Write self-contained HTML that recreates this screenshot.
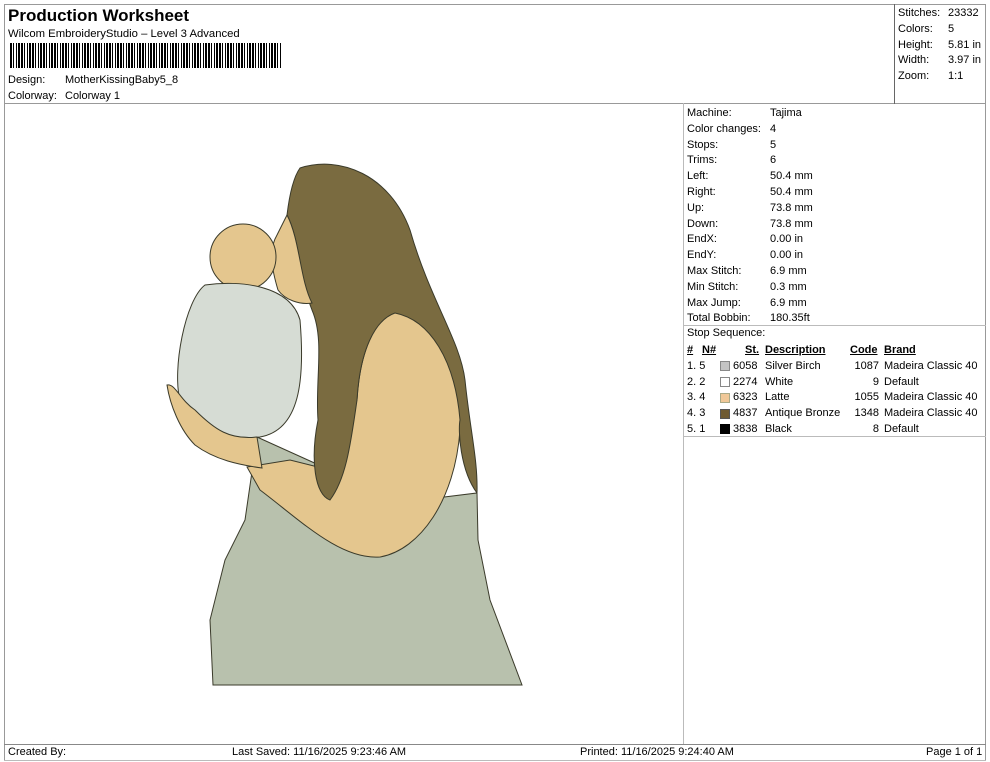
<!DOCTYPE html>
<html><head><meta charset="utf-8"><style>
*{margin:0;padding:0;box-sizing:border-box}
body{width:990px;height:762px;background:#fff;font-family:"Liberation Sans",Arial,sans-serif;font-size:11px;color:#000;position:relative;overflow:hidden}
.a{position:absolute;white-space:nowrap}
.ln{position:absolute;background:#999}
</style></head><body>
<div class="ln" style="left:4px;top:4px;width:982px;height:1px"></div>
<div class="ln" style="left:4px;top:4px;width:1px;height:756px"></div>
<div class="ln" style="left:985px;top:4px;width:1px;height:756px"></div>
<div class="ln" style="left:4px;top:103px;width:982px;height:1px"></div>
<div class="ln" style="left:894px;top:4px;width:1px;height:100px;background:#666"></div>
<div class="ln" style="left:683px;top:103px;width:1px;height:641px;background:#bbb"></div>
<div class="ln" style="left:4px;top:744px;width:982px;height:1px;background:#888"></div>
<div class="ln" style="left:4px;top:760px;width:982px;height:1px;background:#bbb"></div>
<div class="ln" style="left:683px;top:325px;width:303px;height:1px;background:#bbb"></div>
<div class="ln" style="left:683px;top:436px;width:303px;height:1px;background:#bbb"></div>

<div class="a" style="left:8px;top:6px;font-size:17px;font-weight:bold">Production Worksheet</div>
<div class="a" style="left:8px;top:28px;font-size:11.3px">Wilcom EmbroideryStudio – Level 3 Advanced</div>
<div class="a" style="left:10px;top:43px;width:272px;height:25px;background:repeating-linear-gradient(90deg,#000 0 2px,#fff 2px 3px,#000 3px 4px,#fff 4px 6px,#000 6px 7px,#fff 7px 8px,#000 8px 10px,#fff 10px 11px)"></div>
<div class="a" style="left:8px;top:74px">Design:</div><div class="a" style="left:65px;top:74px">MotherKissingBaby5_8</div>
<div class="a" style="left:8px;top:90px">Colorway:</div><div class="a" style="left:65px;top:90px">Colorway 1</div>

<div class="a" style="left:898px;top:6px;line-height:15.8px">Stitches:<br>Colors:<br>Height:<br>Width:<br>Zoom:</div>
<div class="a" style="left:948px;top:6px;line-height:15.8px">23332<br>5<br>5.81 in<br>3.97 in<br>1:1</div>

<div class="a" style="left:687px;top:106px;line-height:15.8px">Machine:<br>Color changes:<br>Stops:<br>Trims:<br>Left:<br>Right:<br>Up:<br>Down:<br>EndX:<br>EndY:<br>Max Stitch:<br>Min Stitch:<br>Max Jump:<br>Total Bobbin:</div>
<div class="a" style="left:770px;top:106px;line-height:15.8px">Tajima<br>4<br>5<br>6<br>50.4 mm<br>50.4 mm<br>73.8 mm<br>73.8 mm<br>0.00 in<br>0.00 in<br>6.9 mm<br>0.3 mm<br>6.9 mm<br>180.35ft</div>

<div class="a" style="left:687px;top:327px">Stop Sequence:</div>
<div style="position:absolute;left:687px;top:343px;line-height:15.8px">
<div class="a" style="left:0;font-weight:bold;text-decoration:underline">#</div>
<div class="a" style="left:15px;font-weight:bold;text-decoration:underline">N#</div>
<div class="a" style="left:58px;font-weight:bold;text-decoration:underline">St.</div>
<div class="a" style="left:78px;font-weight:bold;text-decoration:underline">Description</div>
<div class="a" style="left:163px;font-weight:bold;text-decoration:underline">Code</div>
<div class="a" style="left:197px;font-weight:bold;text-decoration:underline">Brand</div>
<div class="a" style="left:0;top:15.8px">1. 5<br>2. 2<br>3. 4<br>4. 3<br>5. 1</div>
<div class="a" style="left:33px;top:18px;width:10px;height:10px;background:#c4c4c4;border:1px solid #888"></div>
<div class="a" style="left:33px;top:34px;width:10px;height:10px;background:#fff;border:1px solid #888"></div>
<div class="a" style="left:33px;top:50px;width:10px;height:10px;background:#f0c898;border:1px solid #aa8"></div>
<div class="a" style="left:33px;top:66px;width:10px;height:10px;background:#6e5a32;border:1px solid #555"></div>
<div class="a" style="left:33px;top:81px;width:10px;height:10px;background:#000"></div>
<div class="a" style="left:46px;top:15.8px">6058<br>2274<br>6323<br>4837<br>3838</div>
<div class="a" style="left:78px;top:15.8px">Silver Birch<br>White<br>Latte<br>Antique Bronze<br>Black</div>
<div class="a" style="left:160px;top:15.8px;width:32px;text-align:right">1087<br>9<br>1055<br>1348<br>8</div>
<div class="a" style="left:197px;top:15.8px">Madeira Classic 40<br>Default<br>Madeira Classic 40<br>Madeira Classic 40<br>Default</div>
</div>

<svg class="a" style="left:0;top:0" width="683" height="744" viewBox="0 0 683 744">
<g stroke="#3a3a2a" stroke-width="1">
<path d="M213,685 L210,620 L225,560 L245,520 L257,437 L330,470 L420,500 L477,493 L478,540 L490,600 L522,685 Z" fill="#b8c1ad"/>
<path d="M393,313 C430,300 465,350 460,430 C455,500 420,550 380,557 C340,560 300,520 260,490 L247,467 L290,460 L330,470 L357,400 C360,350 375,320 393,313 Z" fill="#e4c68e"/>
<path d="M300,168 C340,155 390,175 410,230 C430,300 460,340 465,380 C470,430 478,460 477,493 C460,470 458,430 460,420 C455,360 430,320 395,313 C375,320 360,350 357,400 C350,450 345,480 330,500 C315,495 310,460 318,420 C315,380 325,340 312,310 C300,280 300,240 287,215 C290,190 295,175 300,168 Z" fill="#7a6b40"/>
<path d="M287,215 C300,240 300,280 312,303 C300,305 285,300 278,290 C272,270 268,250 277,235 Z" fill="#e4c68e"/>
<circle cx="243" cy="257" r="33" fill="#e4c68e"/>
<path d="M205,285 C240,280 290,285 300,320 C305,380 300,430 260,437 C230,440 195,430 180,400 C172,370 185,300 205,285 Z" fill="#d6dcd4"/>
<path d="M167,385 C175,383 180,400 195,410 C215,430 230,440 257,437 L262,468 C240,465 215,460 195,445 C180,430 170,405 167,385 Z" fill="#e4c68e"/>
</g>
</svg>

<div class="a" style="left:8px;top:746px">Created By:</div>
<div class="a" style="left:232px;top:746px">Last Saved: 11/16/2025 9:23:46 AM</div>
<div class="a" style="left:580px;top:746px">Printed: 11/16/2025 9:24:40 AM</div>
<div class="a" style="left:926px;top:746px">Page 1 of 1</div>
</body></html>
